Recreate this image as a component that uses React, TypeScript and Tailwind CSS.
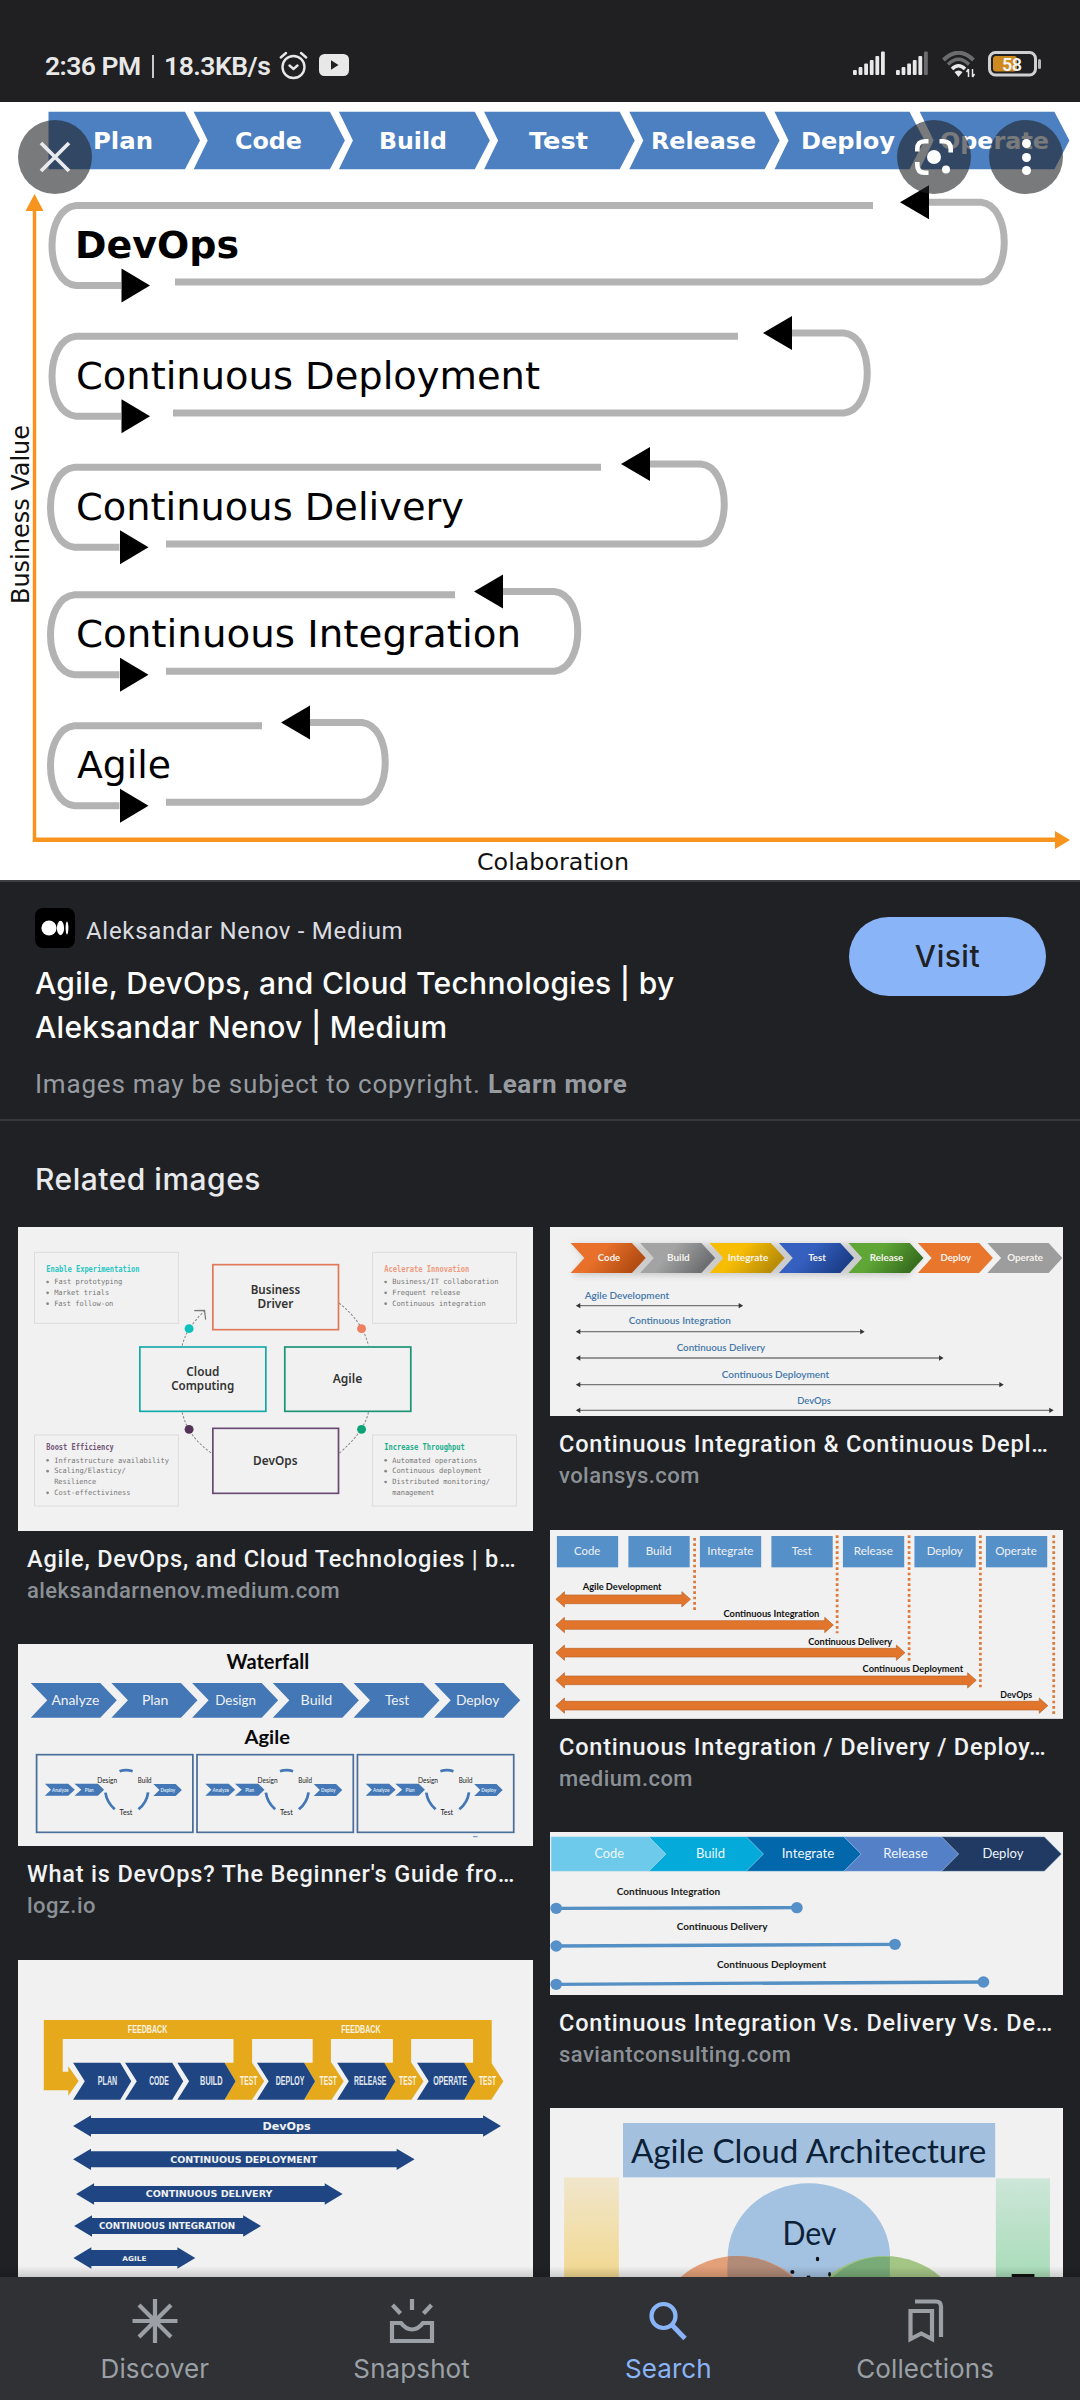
import React from "react";

type TextProps = {
  x: number;
  y: number;
  w: number;
  s: number;
  f?: string;
  b?: number | string;
  c?: string;
  /** Vertical stretch, for condensed lettering. */
  k?: number;
  children: React.ReactNode;
};

const VERDANA = "'DejaVu Sans', sans-serif";
const CALIBRI = "Lato, sans-serif";
const MONO = "'DejaVu Sans Mono', monospace";

/** Diagram label stretched to a known width. */
function T({ x, y, w, s, f = CALIBRI, b = 400, c = "#111", k, children }: TextProps) {
  if (k) {
    return (
      <g transform={`translate(${x} ${y}) scale(1 ${k})`}>
        <text fontSize={s} fontFamily={f} fontWeight={b} fill={c} textLength={w} lengthAdjust="spacingAndGlyphs">
          {children}
        </text>
      </g>
    );
  }
  return (
    <text x={x} y={y} fontSize={s} fontFamily={f} fontWeight={b} fill={c} textLength={w} lengthAdjust="spacingAndGlyphs">
      {children}
    </text>
  );
}

/* ---------------------------------------------------------------- status bar */

function SignalBars({ dimFrom }: { dimFrom: number }) {
  return (
    <svg width="33" height="24" viewBox="0 0 33 24">
      {[5, 8, 11.5, 15, 19, 23.5].map((h, i) => (
        <rect key={i} x={i * 5.6} y={24 - h} width="3.8" height={h} rx="1" fill={i >= dimFrom ? "#6b6c6e" : "#e8e8e8"} />
      ))}
    </svg>
  );
}

function StatusBar() {
  return (
    <div className="flex h-[102px] shrink-0 items-start justify-between bg-[#202022] pr-[38px] pl-[45px] pt-[50px] text-[#e8e8e8]">
      <div className="flex h-[30px] items-center font-['Roboto'] text-[26.5px] leading-[30px] font-semibold">
        <span className="mt-[2px] w-[107px] tracking-[-0.55px] whitespace-nowrap">2:36 PM</span>
        <span className="mt-[2px] h-[23px] w-[2px] bg-[#c8c8c8]" />
        <span className="mt-[2px] ml-[10px] w-[115px] tracking-[-0.5px] whitespace-nowrap">18.3KB/s</span>
        <svg width="29" height="29" viewBox="0 0 29 29" fill="none" stroke="#e8e8e8" strokeWidth="2.4" strokeLinecap="round">
          <circle cx="14.500" cy="16" r="11" />
          <path d="M1.800 6.500 L7 2 M27.200 6.500 L22 2" />
          <path d="M10.500 14.500 L14.500 18 L18.500 14.500" />
        </svg>
        <svg className="ml-[11px]" width="30" height="22" viewBox="0 0 30 22">
          <rect width="30" height="22" rx="5.500" fill="#e8e8e8" />
          <path d="M12 6.300 L19.500 11 L12 15.700 Z" fill="#202022" />
        </svg>
      </div>
      <div className="flex items-start pt-[1px]">
        <SignalBars dimFrom={6} />
        <span className="w-[10px]" />
        <SignalBars dimFrom={5} />
        <svg className="ml-[13px]" width="34" height="27" viewBox="0 0 34 27" fill="none">
          <path d="M1.500 9 Q16.500 -5.500 31.500 9" stroke="#6b6c6e" strokeWidth="4" />
          <path d="M6 13.500 Q16.500 3 27 13.500" stroke="#6b6c6e" strokeWidth="3.500" />
          <path d="M10 18 Q16.500 11.500 23 18" stroke="#e8e8e8" strokeWidth="3.500" />
          <path d="M12.500 21 Q16.500 18 20.500 21 L16.500 26 Z" fill="#e8e8e8" />
          <path d="M26.500 18 V26 M30.500 18 V26 M24.500 21 L26.500 18 M32.500 23 L30.500 26" stroke="#e8e8e8" strokeWidth="1.500" />
        </svg>
        <svg className="ml-[12px]" width="54" height="26" viewBox="0 0 54 26">
          <rect x="1.500" y="1.500" width="46" height="22.500" rx="6" fill="none" stroke="#d0d0d0" strokeWidth="3" />
          <rect x="5" y="5" width="24" height="15.500" rx="3" fill="#cf8a1f" />
          <rect x="50" y="8" width="3" height="10" rx="1.500" fill="#b8b8b8" />
          <text x="14" y="19.500" fontSize="18" fontFamily="Roboto, sans-serif" fontWeight="600" fill="#f4f4f4" textLength="20">58</text>
        </svg>
      </div>
    </div>
  );
}

/* ---------------------------------------------------------------- hero image */

type Loop = {
  label: string;
  bold?: boolean;
  y: number;
  left: number;
  topEnd: number;
  bottomStart: number;
  arcX: number;
  tip: number;
  textX: number;
  textW: number;
};

const LOOPS: Loop[] = [
  { label: "DevOps", bold: true, y: 205.5, left: 0, topEnd: 873, bottomStart: 175, arcX: 981, tip: 900, textX: 75, textW: 164 },
  { label: "Continuous Deployment", y: 336.3, left: 0, topEnd: 738, bottomStart: 173, arcX: 844, tip: 763, textX: 76, textW: 464 },
  { label: "Continuous Delivery", y: 467.3, left: -1.5, topEnd: 601, bottomStart: 166, arcX: 701, tip: 621, textX: 76, textW: 388 },
  { label: "Continuous Integration", y: 594.7, left: -1.5, topEnd: 455, bottomStart: 166, arcX: 554.5, tip: 474, textX: 76, textW: 445 },
  { label: "Agile", y: 725.7, left: -1.5, topEnd: 262, bottomStart: 166, arcX: 362, tip: 281, textX: 77, textW: 94 },
];

const STAGES: [string, number, number][] = [
  ["Plan", 93, 60],
  ["Code", 235, 67],
  ["Build", 379, 68],
  ["Test", 529, 59],
  ["Release", 651, 105],
  ["Deploy", 801, 94],
  ["Operate", 940, 109],
];

function Hero() {
  return (
    <div className="relative h-[778px] shrink-0 bg-white">
      <svg className="block" width="1080" height="778" viewBox="0 102 1080 778">
        {STAGES.map(([name, tx, tw], i) => {
          const l = i === 0 ? 48.5 : 193.7 + 145.2 * (i - 1);
          const r = 185 + 144.9 * i;
          const notch = i === 0 ? l : l + 14;
          return (
            <g key={name}>
              <path d={`M${l} 111.700 H${r} L${r + 15} 140.500 L${r} 169.300 H${l} L${notch} 140.500 Z`} fill="#4d80c1" />
              <T x={tx} y={149} w={tw} s={20.5} k={1.15} f={VERDANA} b={700} c="#fff">{name}</T>
            </g>
          );
        })}
        <g stroke="#f7941d" fill="none">
          <path d="M34.500 206 V842" strokeWidth="3.500" />
          <path d="M33 839.800 H1058" strokeWidth="4.500" />
        </g>
        <path d="M34.500 194 L43.500 211 H25.500 Z M1070 840 L1055 849 V831 Z" fill="#f7941d" />
        {LOOPS.map((o) => {
          const b = o.y + 80;
          const x = 76 + o.left;
          const t2 = o.y - 3.3;
          const b2 = o.y + 76.6;
          return (
            <g key={o.label}>
              <g fill="none" stroke="#b3b3b3" strokeWidth="7">
                <path d={`M${o.topEnd} ${o.y} H${x} C${x - 32} ${o.y + 3} ${x - 32} ${b - 3} ${x} ${b} H${121 + o.left}`} />
                <path d={`M${o.bottomStart} ${b2} H${o.arcX} C${o.arcX + 31} ${b2 - 3} ${o.arcX + 31} ${t2 + 3} ${o.arcX} ${t2} H${o.tip + 27}`} />
              </g>
              <path d={`M${121.5 + o.left} ${b - 17} l28.500 17 l-28.500 17 Z`} fill="#000" />
              <path d={`M${o.tip + 29} ${t2 - 17} l-29 17 l29 17 Z`} fill="#000" />
              <T x={o.textX} y={o.y + 52.600} w={o.textW} s={37} f={VERDANA} b={o.bold ? 700 : 400} c="#000">{o.label}</T>
            </g>
          );
        })}
        <T x={477} y={869.500} w={152} s={23.5} f={VERDANA}>Colaboration</T>
        <g transform="translate(28.500 604) rotate(-90)">
          <T x={0} y={0} w={179} s={24} f={VERDANA}>Business Value</T>
        </g>
      </svg>
      <button className="absolute top-[18px] left-[18px] flex h-[74px] w-[74px] items-center justify-center rounded-full bg-[#202124]/60" aria-label="Close">
        <svg width="32" height="32" viewBox="0 0 32 32" stroke="#e8eaed" strokeWidth="3.800">
          <path d="M2 2 L30 30 M30 2 L2 30" />
        </svg>
      </button>
      <button className="absolute top-[18px] left-[897px] flex h-[74px] w-[74px] items-center justify-center rounded-full bg-[#202124]/60" aria-label="Lens">
        <svg width="40" height="38" viewBox="0 0 40 38" fill="none" stroke="#fff" strokeWidth="4.600">
          <path d="M3.300 13.500 V11 Q3.300 3.300 11 3.300 H14.500" />
          <path d="M25.500 3.300 H29 Q36.700 3.300 36.700 11 V14.500" />
          <path d="M3.300 24 V27 Q3.300 34.700 11 34.700 H14.500" />
          <circle cx="20" cy="19" r="7" fill="#fff" stroke="none" />
          <circle cx="32" cy="31.500" r="4" fill="#fff" stroke="none" />
        </svg>
      </button>
      <button className="absolute top-[18px] left-[989px] flex h-[74px] w-[74px] flex-col items-center justify-center gap-[4.500px] rounded-full bg-[#202124]/60" aria-label="More">
        <span className="h-[9px] w-[9px] rounded-full bg-white" />
        <span className="h-[9px] w-[9px] rounded-full bg-white" />
        <span className="h-[9px] w-[9px] rounded-full bg-white" />
      </button>
    </div>
  );
}

/* ---------------------------------------------------------------- source info */

function Info() {
  return (
    <div className="flex h-[241px] shrink-0 items-start justify-between border-t-2 border-b-2 border-t-[#3c4043] border-b-[#35373b] pr-[34px] pl-[35px]">
      <div className="pt-[26px]">
        <div className="flex h-[40px] items-center">
          <svg width="40" height="40" viewBox="0 0 40 40">
            <rect width="40" height="40" rx="8" fill="#000" />
            <circle cx="14" cy="20" r="7.600" fill="#fff" />
            <ellipse cx="25.500" cy="20" rx="3.600" ry="7.200" fill="#fff" />
            <ellipse cx="32" cy="20" rx="1.400" ry="6.400" fill="#fff" />
          </svg>
          <span className="mt-[6px] ml-[11px] font-['Roboto'] text-[24px] leading-[28px] tracking-[0.7px] whitespace-nowrap text-[#dadce0]">
            Aleksandar Nenov - Medium
          </span>
        </div>
        <div className="mt-[13px] font-['Inter'] text-[30px] leading-[44px] font-medium tracking-[0.3px] whitespace-nowrap text-white">
          Agile, DevOps, and Cloud Technologies | by
          <br />
          Aleksandar Nenov | Medium
        </div>
        <div className="mt-[19px] font-['Roboto'] text-[26px] leading-[32px] tracking-[0.8px] whitespace-nowrap text-[#969ba1]">
          Images may be subject to copyright. <span className="font-bold tracking-[0.65px]">Learn more</span>
        </div>
      </div>
      <button className="mt-[35px] flex h-[79px] w-[197px] items-center justify-center rounded-full bg-[#8ab4f8] font-['Inter'] text-[30px] font-medium tracking-[0.5px] text-[#202124]">
        Visit
      </button>
    </div>
  );
}

/* ---------------------------------------------------------------- thumbnails */

function NoteBox({ x, y, title, color, tw, lines }: { x: number; y: number; title: string; color: string; tw: number; lines: [string, number][] }) {
  const cont = (s: string) => s === "Resilience" || s === "management";
  return (
    <g>
      <rect x={x} y={y} width="418" height="213" fill="none" stroke="#dcdcdc" strokeWidth="3" />
      <T x={x + 34} y={y + (y < 300 ? 60 : 46)} w={tw} s={24} f={MONO} b={700} c={color}>{title}</T>
      {lines.map(([s, w], i) => {
        const by = y + (y < 300 ? 96 : 83) + i * 32.5;
        return (
          <g key={s}>
            {!cont(s) && <circle cx={x + 38} cy={by - 7} r="4" fill="#888" />}
            <T x={x + 57} y={by} w={w} s={22} f={MONO} c="#777">{s}</T>
          </g>
        );
      })}
    </g>
  );
}

function CycleThumb() {
  const F = "'Noto Sans', sans-serif";
  return (
    <svg className="block bg-[#f1f1f1]" width="515" height="304" viewBox="52 36 1496 912" preserveAspectRatio="none">
      <NoteBox x={100} y={112} title="Enable Experimentation" color="#2cc6c3" tw={271} lines={[["Fast prototyping", 198], ["Market trials", 160], ["Fast follow-on", 172]]} />
      <NoteBox x={1082} y={112} title="Acelerate Innovation" color="#f09a80" tw={247} lines={[["Business/IT collaboration", 309], ["Frequent release", 198], ["Continuous integration", 272]]} />
      <NoteBox x={100} y={660} title="Boost Efficiency" color="#735678" tw={196} lines={[["Infrastructure availability", 334], ["Scaling/Elasticy/", 208], ["Resilience", 122], ["Cost-effectiviness", 222]]} />
      <NoteBox x={1082} y={660} title="Increase Throughput" color="#22ae8b" tw={234} lines={[["Automated operations", 247], ["Continuous deployment", 260], ["Distributed monitoring/", 284], ["management", 123]]} />
      <g fill="none" stroke="#888" strokeWidth="3" strokeDasharray="7 5">
        <path d="M529 392 Q540 340 594 288" />
        <path d="M984 264 Q1054 320 1070 392" />
        <path d="M529 592 Q545 665 616 716" />
        <path d="M1070 592 Q1058 650 984 716" />
      </g>
      <path d="M564 287 L594 286 L597 314" fill="none" stroke="#777" strokeWidth="3.500" />
      <g fill="none" strokeWidth="5">
        <rect x="618" y="149" width="365" height="195" stroke="#e07a5a" />
        <rect x="406" y="396" width="366" height="193" stroke="#17a9a9" />
        <rect x="827" y="396" width="366" height="193" stroke="#1a9474" />
        <rect x="618" y="640" width="365" height="195" stroke="#6a4a72" />
      </g>
      <circle cx="549" cy="341" r="13" fill="#0fc1bd" />
      <circle cx="1050" cy="341" r="13" fill="#ee8060" />
      <circle cx="549" cy="643" r="13" fill="#553358" />
      <circle cx="1050" cy="643" r="13" fill="#0ca377" />
      <T x={728} y={237} w={144} s={36} f={F} b={600} c="#333">Business</T>
      <T x={748} y={278} w={104} s={36} f={F} b={600} c="#333">Driver</T>
      <T x={541} y={483} w={96} s={36} f={F} b={600} c="#333">Cloud</T>
      <T x={497} y={524} w={183} s={36} f={F} b={600} c="#333">Computing</T>
      <T x={966} y={505} w={86} s={36} f={F} b={600} c="#333">Agile</T>
      <T x={735} y={751} w={129} s={36} f={F} b={600} c="#333">DevOps</T>
    </svg>
  );
}

function chevron(l: number, r: number, tip: number, notch: number, t: number, b: number) {
  const m = (t + b) / 2;
  return `M${l} ${t} H${r} L${tip} ${m} L${r} ${b} H${l} L${notch} ${m} Z`;
}

function WaterfallThumb() {
  const stages: [string, number, number][] = [["Analyze", 149, 139], ["Plan", 412, 77], ["Design", 625, 118], ["Build", 873, 92], ["Test", 1118, 70], ["Deploy", 1324, 126]];
  return (
    <svg className="block bg-[#f1f1f1]" width="515" height="202" viewBox="52 72 1496 606" preserveAspectRatio="none">
      <T x={658} y={147} w={240} s={60} b={700} c="#0a0a0a">Waterfall</T>
      {stages.map(([n, x, w], i) => {
        const l = 89 + i * 234.4;
        return (
          <g key={n}>
            <path d={chevron(l, l + 202, l + 250, l + 48, 189, 293)} fill="#4377b6" />
            <T x={x} y={256} w={w} s={43} c="#f1f1f1">{n}</T>
          </g>
        );
      })}
      <T x={710} y={371} w={132} s={58} b={700} c="#0a0a0a">Agile</T>
      {[0, 466, 932].map((dx) => (
        <g key={dx} transform={`translate(${dx} 0)`}>
          <rect x="106" y="404" width="454" height="233" fill="none" stroke="#4a6d99" strokeWidth="5" />
          <path d={chevron(130, 198, 217, 148, 491, 527)} fill="#4377b6" />
          <path d={chevron(216, 284, 302, 236, 491, 527)} fill="#4377b6" />
          <path d={chevron(445, 510, 528, 463, 492, 528)} fill="#4377b6" />
          <T x={151} y={515} w={48} s={16} b={700} c="#dce6f2">Analyze</T>
          <T x={246} y={515} w={26} s={16} b={700} c="#dce6f2">Plan</T>
          <T x={466} y={517} w={43} s={16} b={700} c="#dce6f2">Deploy</T>
          <T x={282} y={489} w={58} s={23} c="#222">Design</T>
          <T x={400} y={489} w={40} s={23} c="#222">Build</T>
          <T x={347} y={585} w={37} s={23} c="#222">Test</T>
          <g fill="none" stroke="#4377b6" strokeWidth="8">
            <path d="M347 454 Q366 447 385 454" />
            <path d="M306 518 Q310 547 333 568" />
            <path d="M430 517 Q426 548 402 568" />
          </g>
        </g>
      ))}
      <path d="M1374 650 H1387" stroke="#5b87bd" strokeWidth="3" />
    </svg>
  );
}

function doubleArrow(x1: number, x2: number, y: number, bar: number, head: number, len: number) {
  return `M${x1} ${y} L${x1 + len} ${y - head} V${y - bar} H${x2 - len} V${y - head} L${x2} ${y} L${x2 - len} ${y + head} V${y + bar} H${x1 + len} V${y + head} Z`;
}

function FeedbackThumb() {
  const navy = "#1f4683";
  const gold = "#e5a91b";
  const F = "'Liberation Sans', sans-serif";
  const blue: [string, number, number, number][] = [["PLAN", 212, 284, 56], ["CODE", 363, 433, 57], ["BUILD", 515, 581, 65], ["DEPLOY", 746, 801, 83], ["RELEASE", 979, 1028, 94], ["OPERATE", 1211, 1258, 98]];
  const tests: [number, number][] = [[652, 697], [883, 928], [1115, 1159], [1347, 1391]];
  const bars: [string, number, number, number, number, number, number][] = [
    ["DevOps", 212, 1455, 558, 762, 140, 32],
    ["CONTINUOUS DEPLOYMENT", 212, 1204, 658, 494, 427, 27],
    ["CONTINUOUS DELIVERY", 221, 995, 762, 423, 368, 27],
    ["CONTINUOUS INTEGRATION", 215, 758, 858, 287, 396, 25],
    ["AGILE", 213, 567, 954, 355, 70, 20],
  ];
  return (
    <svg className="block bg-[#f1f1f1]" width="515" height="317" viewBox="52 60 1496 951" preserveAspectRatio="none">
      <path d="M127 240 H1428 V370 H1374 V297 H1194 V370 H1141 V297 H961 V370 H908 V297 H732 V370 H678 V297 H182 V395 H198 V379 L228 423 L198 467 V451 H127 Z" fill={gold} />
      {tests.map(([x, tx]) => (
        <g key={x}>
          <path d={chevron(x, x + 80, x + 115, x + 32, 368, 479)} fill={gold} />
          <T x={tx} y={436} w={50} s={19.5} k={1.9} f={F} b={700} c="#faf3e0">TEST</T>
        </g>
      ))}
      {blue.map(([n, x, tx, tw]) => (
        <g key={n}>
          <path d={chevron(x, x + 137, x + 169, x + 34, 368, 479)} fill={navy} />
          <T x={tx} y={436} w={tw} s={20} k={1.85} f={F} b={700} c="#e4e9f1">{n}</T>
        </g>
      ))}
      <T x={371} y={280} w={115} s={20.5} k={1.7} f={F} b={700} c="#faf3e0">FEEDBACK</T>
      <T x={991} y={280} w={114} s={20.5} k={1.7} f={F} b={700} c="#faf3e0">FEEDBACK</T>
      {bars.map(([n, x1, x2, y, tx, tw, s]) => (
        <g key={n}>
          <path d={doubleArrow(x1, x2, y, 24, 32, 52)} fill={navy} />
          <T x={tx} y={y + s * 0.38} w={tw} s={s} f={VERDANA} b={700} c="#f1f1f1">{n}</T>
        </g>
      ))}
    </svg>
  );
}

function PipelineThumb() {
  const stages: [string, string, string, number, number][] = [
    ["Code", "#e8702a", "#b34d12", 168, 65],
    ["Build", "#a3a3a3", "#6d6f72", 369, 66],
    ["Integrate", "#f7bd05", "#b98d08", 545, 118],
    ["Test", "#3560c0", "#1c3f8a", 779, 51],
    ["Release", "#5fa636", "#38701f", 958, 97],
    ["Deploy", "#e8762d", "#e8762d", 1163, 89],
    ["Operate", "#9d9d9d", "#9d9d9d", 1357, 104],
  ];
  const rows: [string, number, number, number, number, number][] = [
    ["Agile Development", 130, 245, 252, 272, 590],
    ["Continuous Integration", 258, 296, 328, 350, 943],
    ["Continuous Delivery", 397, 257, 407, 429, 1172],
    ["Continuous Deployment", 528, 312, 489, 509, 1347],
    ["DevOps", 747, 98, 567, 586, 1492],
  ];
  return (
    <svg className="block bg-[#f1f1f1]" width="513" height="189" viewBox="29 36 1490 567" preserveAspectRatio="none">
      <defs>
        {stages.map(([n, a, b]) => (
          <linearGradient key={n} id={`grad-${n}`} x1="0" y1="0" x2="1" y2="0.35">
            <stop offset="0.45" stopColor={a} />
            <stop offset="1" stopColor={b} />
          </linearGradient>
        ))}
        <filter id="soft" x="-10%" y="-50%" width="120%" height="200%">
          <feGaussianBlur stdDeviation="9" />
        </filter>
      </defs>
      <path d="M95 86 H1070 L1105 130 L1070 182 H95 L128 130 Z" fill="#b9b9b9" opacity="0.65" filter="url(#soft)" />
      {stages.map(([n, , , x, w], i) => {
        const l = 89 + i * 201.700;
        return (
          <g key={n}>
            <path d={chevron(l, l + 178, l + 218, l + 40, 84, 174)} fill={`url(#grad-${n})`} />
            <T x={x} y={138} w={w} s={29} b={700} c="#f6f3ee">{n}</T>
          </g>
        );
      })}
      {rows.map(([n, x, w, ty, ly, end]) => (
        <g key={n}>
          <T x={x} y={ty} w={w} s={29} b={600} c="#4377a8">{n}</T>
          <path d={`M112 ${ly} H${end - 8}`} stroke="#777" strokeWidth="4" />
          <path d={`M104 ${ly} l13 -8 v16 Z M${end} ${ly} l-13 -8 v16 Z`} fill="#333" />
        </g>
      ))}
    </svg>
  );
}

function BoxesThumb() {
  const stages: [string, number, number][] = [["Code", 99, 76], ["Build", 307, 75], ["Integrate", 486, 134], ["Test", 731, 58], ["Release", 911, 114], ["Deploy", 1123, 105], ["Operate", 1322, 121]];
  const rows: [string, number, number, number, number, number][] = [
    ["Agile Development", 124, 229, 269, 298, 437],
    ["Continuous Integration", 533, 278, 350, 375, 852],
    ["Continuous Delivery", 779, 244, 434, 458, 1060],
    ["Continuous Deployment", 937, 292, 515, 541, 1267],
    ["DevOps", 1337, 92, 595, 617, 1475],
  ];
  const dots: [number, number, number][] = [[449, 114, 333], [863, 106, 400], [1072, 106, 482], [1279, 106, 566], [1492, 106, 642]];
  return (
    <svg className="block bg-[#f1f1f1]" width="513" height="189" viewBox="29 90 1490 567" preserveAspectRatio="none">
      {stages.map(([n, x, w], i) => (
        <g key={n}>
          <rect x={49 + i * 207.700} y="108" width="178" height="94" fill="#5590c9" />
          <T x={x} y={165} w={w} s={36} c="#f1f1f1">{n}</T>
        </g>
      ))}
      {dots.map(([x, a, b]) => (
        <path key={x} d={`M${x} ${a} V${b}`} stroke="#dd7a38" strokeWidth="8" strokeDasharray="8 8" />
      ))}
      {rows.map(([n, x, w, ty, ay, end]) => (
        <g key={n}>
          <path d={doubleArrow(46, end, ay, 13, 23, 25)} fill="#e1752b" stroke="#b9642a" strokeWidth="2" />
          <T x={x} y={ty} w={w} s={27} b={700} c="#111">{n}</T>
        </g>
      ))}
      <path d="M29 655.500 H1519" stroke="#d5d5d5" strokeWidth="3" />
    </svg>
  );
}

function SaviantThumb() {
  const stages: [string, string, number, number][] = [["Code", "#6dcaea", 158, 86], ["Build", "#04aad9", 453, 84], ["Integrate", "#0268ab", 702, 153], ["Release", "#5480c8", 997, 129], ["Deploy", "#213a64", 1285, 119]];
  const rows: [string, number, number, number, number, number, number][] = [
    ["Continuous Integration", 223, 300, 284, 325, 746, 323],
    ["Continuous Delivery", 397, 264, 391, 438, 1031, 433],
    ["Continuous Deployment", 514, 317, 505, 553, 1288, 546],
  ];
  return (
    <svg className="block bg-[#f1f1f1]" width="513" height="163" viewBox="29 96 1490 489" preserveAspectRatio="none">
      {stages.map(([n, c, x, w], i) => {
        const l = i === 0 ? 32 : 32 + i * 283.500;
        const r = 316 + i * 287.200;
        return (
          <g key={n}>
            <path d={chevron(l, r, r + 50, i === 0 ? l : l + 50, 110, 214)} fill={c} stroke="#cfe3f2" strokeWidth="1.500" />
            <T x={x} y={175} w={w} s={41} c="#eef6fb">{n}</T>
          </g>
        );
      })}
      {rows.map(([n, x, w, ty, y1, x2, y2]) => (
        <g key={n}>
          <T x={x} y={ty} w={w} s={30} b={700} c="#1a1a1a">{n}</T>
          <path d={`M47 ${y1} L${x2} ${y2}`} stroke="#5590c5" strokeWidth="10" />
          <circle cx="47" cy={y1} r="17" fill="#5590c9" />
          <circle cx={x2} cy={y2} r="17" fill="#5590c9" />
        </g>
      ))}
    </svg>
  );
}

function ArchitectureThumb() {
  return (
    <svg className="block bg-[#f1f1f1]" width="513" height="169" viewBox="29 84 1490 507" preserveAspectRatio="none">
      <defs>
        <linearGradient id="sand" x1="0" y1="0" x2="0" y2="1">
          <stop offset="0" stopColor="#f1e6cc" />
          <stop offset="1" stopColor="#f1d890" />
        </linearGradient>
        <linearGradient id="mint" x1="0" y1="0" x2="0" y2="1">
          <stop offset="0" stopColor="#cde6d8" />
          <stop offset="1" stopColor="#a9dcb9" />
        </linearGradient>
      </defs>
      <rect x="241" y="129" width="1081" height="163" fill="#a3c1df" />
      <T x={264} y={248} w={1032} s={98} c="#0c2138">Agile Cloud Architecture</T>
      <rect x="70" y="292" width="159" height="300" fill="url(#sand)" />
      <rect x="1324" y="295" width="157" height="297" fill="url(#mint)" />
      <ellipse cx="781" cy="532" rx="236" ry="222" fill="#a3c1e0" />
      <ellipse cx="573" cy="752" rx="236" ry="224" fill="#e29264" opacity="0.85" />
      <path d="M545 591 Q542 558 547 529 Q655 522 733 591 Z" fill="#b18a78" />
      <ellipse cx="1000" cy="752" rx="236" ry="224" fill="#9fc37e" opacity="0.95" />
      <path d="M850 591 Q920 524 1016 531 V591 Z" fill="#79ab78" />
      <T x={704} y={494} w={157} s={96} c="#0c2138">Dev</T>
      <g fill="#111">
        <ellipse cx="806" cy="537" rx="5" ry="7" />
        <ellipse cx="733" cy="576" rx="6" ry="6" />
        <ellipse cx="841" cy="583" rx="4" ry="7" />
        <rect x="775" y="587" width="10" height="4" />
        <rect x="1370" y="582" width="66" height="9" />
      </g>
    </svg>
  );
}

/* ---------------------------------------------------------------- cards */

function Card({ title, site, tall, children }: { title?: string; site?: string; tall?: boolean; children: React.ReactNode }) {
  return (
    <div className="shrink-0">
      {children}
      {title && (
        <div className={`flex flex-col pt-[14px] pl-[9px] font-['Roboto'] whitespace-nowrap ${tall ? "h-[114px]" : "h-[113px]"}`}>
          <span className="h-[28px] text-[23.5px] leading-[28px] font-medium tracking-[0.8px] text-[#f1f3f4]">{title}</span>
          <span className="mt-[4px] text-[22px] leading-[28px] font-medium tracking-[0.43px] text-[#9aa0a6]/90">{site}</span>
        </div>
      )}
    </div>
  );
}

/* ---------------------------------------------------------------- bottom navigation */

function NavItem({ label, active, children }: { label: string; active?: boolean; children: React.ReactNode }) {
  return (
    <div className={`flex flex-1 flex-col items-center pt-[20px] ${active ? "text-[#8ab4f8]" : "text-[#9aa0a6]"}`}>
      <svg width="48" height="48" viewBox="0 0 48 48" fill="none" stroke="currentColor" strokeWidth="4.200">
        {children}
      </svg>
      <span className="mt-[8px] font-['Inter'] text-[26px] leading-[32px] tracking-[0.1px]">{label}</span>
    </div>
  );
}

function BottomNav() {
  return (
    <div className="flex h-[123px] shrink-0 bg-[#303134] px-[26.5px]">
      <NavItem label="Discover">
        <path d="M24 2 V46 M1.500 24 H46.500 M8 8 L40 40 M40 8 L8 40" />
      </NavItem>
      <NavItem label="Snapshot">
        <path d="M24 2 V13 M4.500 8 L12.500 16.500 M43.500 8 L35.500 16.500" />
        <path d="M4 26 H13 Q18 32.500 24 32.500 Q30 32.500 35 26 H44 V44 H4 Z" />
      </NavItem>
      <NavItem label="Search" active>
        <circle cx="19.500" cy="19" r="12" />
        <path d="M27.500 27.500 L41 41.500" strokeWidth="4.800" />
      </NavItem>
      <NavItem label="Collections">
        <path d="M9.500 14 H31 V42 L20.300 36.500 L9.500 42 Z" />
        <path d="M14 4.500 H35 Q40 4.500 40 9.500 V40" />
      </NavItem>
    </div>
  );
}

export default function App() {
  return (
    <div className="flex h-[2400px] w-[1080px] flex-col overflow-hidden bg-[#202124]">
      <StatusBar />
      <Hero />
      <Info />
      <div className="relative flex min-h-0 flex-1 flex-col overflow-hidden">
        <h2 className="h-[106px] shrink-0 pt-[40px] pl-[35px] font-['Inter'] text-[30px] leading-[36px] font-medium tracking-[0.5px] text-[#e8eaed]">
          Related images
        </h2>
        <div className="flex items-start gap-[17px] pl-[18px]">
          <div className="flex w-[515px] flex-col">
            <Card title="Agile, DevOps, and Cloud Technologies | b…" site="aleksandarnenov.medium.com">
              <CycleThumb />
            </Card>
            <Card title="What is DevOps? The Beginner's Guide fro…" site="logz.io" tall>
              <WaterfallThumb />
            </Card>
            <Card>
              <FeedbackThumb />
            </Card>
          </div>
          <div className="flex w-[513px] flex-col">
            <Card title="Continuous Integration & Continuous Depl…" site="volansys.com" tall>
              <PipelineThumb />
            </Card>
            <Card title="Continuous Integration / Delivery / Deploy…" site="medium.com">
              <BoxesThumb />
            </Card>
            <Card title="Continuous Integration Vs. Delivery Vs. De…" site="saviantconsulting.com">
              <SaviantThumb />
            </Card>
            <Card>
              <ArchitectureThumb />
            </Card>
          </div>
        </div>
        <div className="absolute inset-x-0 bottom-0 h-[11px] bg-gradient-to-b from-transparent to-black/15" />
      </div>
      <BottomNav />
    </div>
  );
}
